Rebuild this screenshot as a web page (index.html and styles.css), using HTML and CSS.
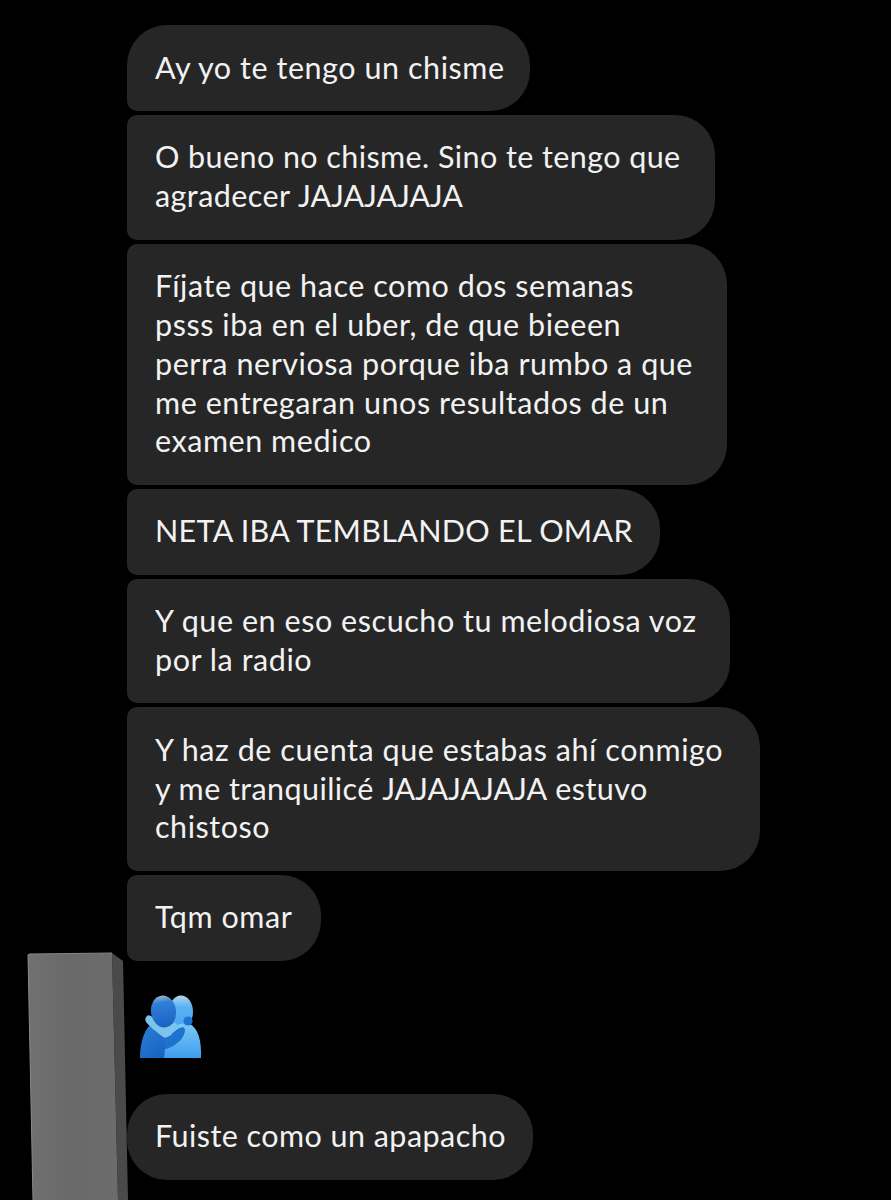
FILE: index.html
```html
<!DOCTYPE html>
<html lang="es">
<head>
    <meta charset="UTF-8">
    <meta name="viewport" content="width=device-width, initial-scale=1.0">
    <title>Mensajes</title>
    <link rel="stylesheet" href="styles.css">
</head>
<body>

    <!-- Censor block over the avatar -->
    <svg class="censor" width="104" height="250" viewBox="0 0 104 250">
        <defs>
            <linearGradient id="slabFront" x1="0" y1="0" x2="1" y2="0">
                <stop offset="0" stop-color="#707070"/>
                <stop offset="0.5" stop-color="#696969"/>
                <stop offset="1" stop-color="#6c6c6c"/>
            </linearGradient>
        </defs>
        <polygon points="85,3 96,11 101,250 91,250" fill="#4a4a4a"/>
        <polygon points="1,5 2,4 85,3 91,250 6,250" fill="url(#slabFront)"/>
        <polyline points="1,5 2,4 85,3" fill="none" stroke="#858585" stroke-width="1"/>
        <polyline points="1,5 6,250" fill="none" stroke="#8a8a8a" stroke-width="1"/>
    </svg>

    <div class="chat">
        <div class="group">
            <div class="bubble first w-403">Ay yo te tengo un chisme</div>
            <div class="bubble tight w-588">O bueno no chisme. Sino te tengo que<br>agradecer <span class="laugh">JAJAJAJAJA</span></div>
            <div class="bubble w-600">Fíjate que hace como dos semanas<br>psss iba en el uber, de que bieeen<br>perra nerviosa porque iba rumbo a que<br>me entregaran unos resultados de un<br>examen medico</div>
            <div class="bubble shout w-533">NETA IBA TEMBLANDO EL OMAR</div>
            <div class="bubble w-603">Y que en eso escucho tu melodiosa voz<br>por la radio</div>
            <div class="bubble w-633">Y haz de cuenta que estabas ahí conmigo<br><span class="tight">y me tranquilicé</span> <span class="laugh">JAJAJAJAJA</span> <span class="tight">estuvo</span><br>chistoso</div>
            <div class="bubble w-194">Tqm omar</div>
        </div>

        <div class="emoji">
            <svg width="62" height="64" viewBox="0 0 62 64">
                <defs>
                    <linearGradient id="backBody" x1="0" y1="0" x2="0" y2="1">
                        <stop offset="0" stop-color="#7ccaf5"/>
                        <stop offset="1" stop-color="#3f9ded"/>
                    </linearGradient>
                    <linearGradient id="frontBody" x1="0" y1="0" x2="1" y2="1">
                        <stop offset="0" stop-color="#2b82dc"/>
                        <stop offset="1" stop-color="#1258b4"/>
                    </linearGradient>
                    <linearGradient id="frontHead" x1="0" y1="0" x2="0" y2="1">
                        <stop offset="0" stop-color="#9db8c6"/>
                        <stop offset="0.22" stop-color="#2f7fd8"/>
                        <stop offset="1" stop-color="#1a62c2"/>
                    </linearGradient>
                    <linearGradient id="backHead" x1="0" y1="0" x2="0" y2="1">
                        <stop offset="0" stop-color="#b4d6e8"/>
                        <stop offset="0.35" stop-color="#59b2f5"/>
                        <stop offset="1" stop-color="#4ba6f0"/>
                    </linearGradient>
                </defs>
                <!-- back person -->
                <ellipse cx="41" cy="17" rx="12" ry="16.500" fill="url(#backHead)"/>
                <path d="M23 63 L23 38 Q38 26 50 29 Q62 36 61 63 Z" fill="url(#backBody)"/>
                <!-- front person -->
                <path d="M0 63 C0 46 5 32 14 27 L30 41 C35 36 41 31 44 33 C47 38 40 50 25 54 L24 63 Z" fill="url(#frontBody)"/>
                <!-- arm around the shoulder -->
                <path d="M7 21 C9 19 13 22 16 26 C20 30 28 29 36 28 L38 32 L30 41 L25 43 C19 39 11 33 6 27 C5 25 5 23 7 21 Z" fill="#7cc3ee"/>
                <path d="M30 41 C35 36 41 31 44 33 C47 38 40 50 25 54 L25 43 Z" fill="#1f72d0"/>
                <ellipse cx="23.500" cy="16.500" rx="12.500" ry="16" transform="rotate(-8 23.500 16.500)" fill="url(#frontHead)"/>
                <circle cx="48" cy="26" r="4.600" fill="#1f74d4"/>
            </svg>
        </div>

        <div class="bubble single w-406">Fuiste como un apapacho</div>
    </div>

</body>
</html>
```

FILE: styles.css
```css
body {
    margin: 0;
    height: 1200px;
    overflow: hidden;
    position: relative;
    background-color: #000;
    font-family: Lato, "Open Sans", sans-serif;
}
.chat {
    padding: 25px 0 0 127px;
}
.group {
    display: flex;
    flex-direction: column;
    gap: 4px;
}
.bubble {
    box-sizing: border-box;
    padding: 22.5px 0 24.5px 28px;
    background-color: #262626;
    color: #f2f2f2;
    font-size: 30.5px;
    letter-spacing: 0.55px;
    line-height: 38.85px;
    white-space: nowrap;
    border-radius: 10px 40px 40px 10px;
}
.bubble.first {
    border-top-left-radius: 40px;
}
.bubble.single {
    border-radius: 40px;
    letter-spacing: 0.45px;
}
.bubble.shout {
    letter-spacing: 0.3px;
}
.tight {
    letter-spacing: 0.42px;
}
.bubble.tight {
    letter-spacing: 0.42px;
}
.laugh {
    letter-spacing: -0.15px;
}
.w-194 { width: 194px; }
.w-403 { width: 403px; }
.w-406 { width: 406px; }
.w-533 { width: 533px; }
.w-588 { width: 588px; }
.w-600 { width: 600px; }
.w-603 { width: 603px; }
.w-633 { width: 633px; }
.emoji {
    height: 64px;
    padding: 34px 0 35px 13px;
}
.emoji svg {
    display: block;
}
.censor {
    position: absolute;
    left: 27px;
    top: 950px;
}
```
